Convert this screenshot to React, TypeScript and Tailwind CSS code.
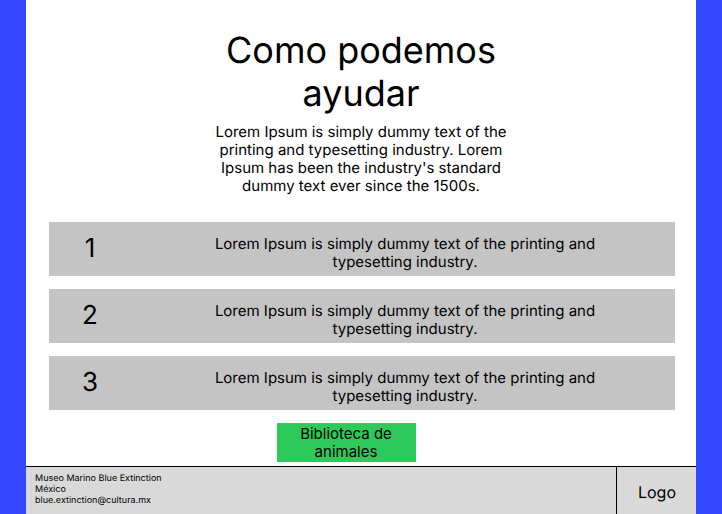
const steps = [1, 2, 3];

export default function App() {
  return (
    <div className="flex min-h-screen flex-col bg-[#3448ff] px-[26px] font-['Inter',sans-serif] text-black [text-rendering:geometricPrecision]">
      <main className="flex grow flex-col bg-white pt-[29px] pr-[21px] pl-[23px]">
        <header className="flex flex-col items-center pr-[2px]">
          <h1 className="w-[300px] text-center text-[36px] leading-[43px]">Como podemos ayudar</h1>
          <p className="mt-2 w-[310px] text-center text-[15px] leading-[18px]">
            Lorem Ipsum is simply dummy text of the printing and typesetting industry. Lorem Ipsum has been the industry's standard dummy text ever since the 1500s.
          </p>
        </header>
        <ol className="mt-[27px] flex w-full flex-col gap-[13px]">
          {steps.map((n) => (
            <li key={n} className="flex h-[54px] items-center bg-[#c4c4c4] pr-[70px]">
              <span className="w-[82px] pb-px text-center text-[26px] leading-8">{n}</span>
              <p className="ml-auto w-[400px] pt-2 text-center text-[15px] leading-[18px]">
                Lorem Ipsum is simply dummy text of the printing and typesetting industry.
              </p>
            </li>
          ))}
        </ol>
        <div className="mt-[13px] mb-1 flex justify-center pr-8">
          <button className="w-[139px] bg-[#2dc95a] px-4 pt-[2px] pb-[1px] text-[15px] leading-[18px]">
            Biblioteca de animales
          </button>
        </div>
      </main>
      <footer className="flex h-12 border-t border-black bg-[#d9d9d9]">
        <address className="grow pt-[6px] pl-[9px] text-[9px] leading-[11px] not-italic">
          Museo Marino Blue Extinction
          <br />
          México
          <br />
          blue.extinction@cultura.mx
        </address>
        <div className="flex w-20 items-center justify-center border-l border-black pt-[2px] pl-px text-[16px]">Logo</div>
      </footer>
    </div>
  );
}
